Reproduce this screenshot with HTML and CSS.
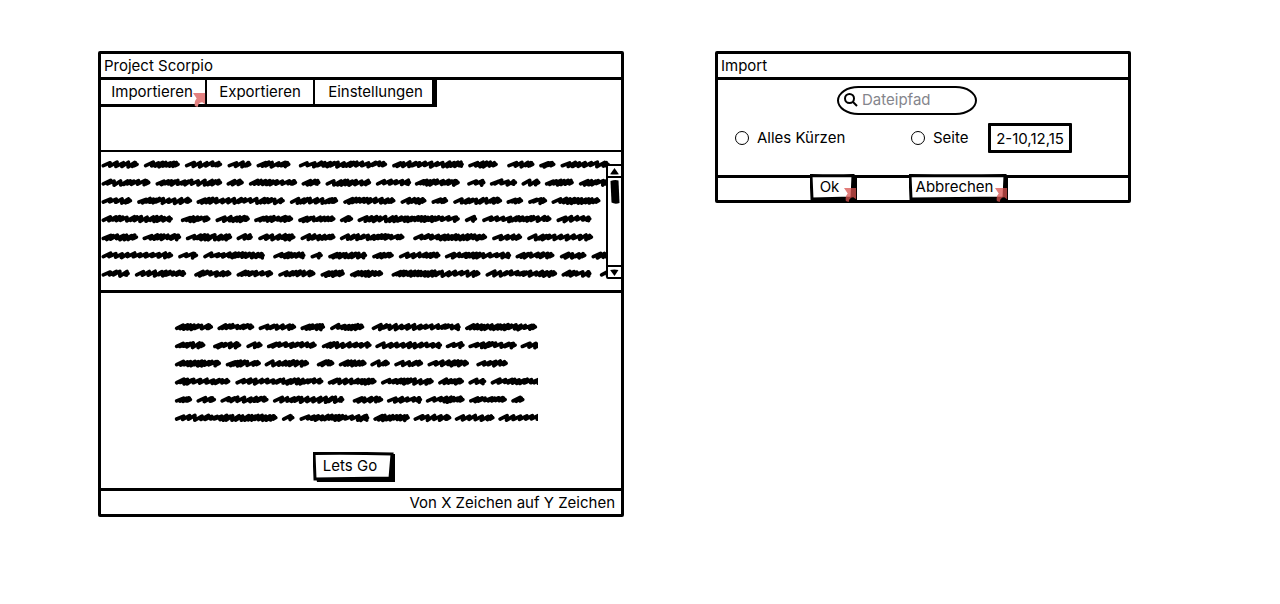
FILE: index.html
```html
<!DOCTYPE html>
<html lang="de">
<head>
<meta charset="utf-8">
<title>Project Scorpio</title>
<link rel="stylesheet" href="styles.css">
</head>
<body>
<svg class="defs" aria-hidden="true">
  <symbol id="link-arrow" viewBox="0 0 14 16"><path d="M0 1 L13 1 L13 13 L10 11 Q6 11 5 16 L2 15 Q1 10 4 7 Z"/></symbol>
</svg>
<main class="board">
  <section class="window">
    <h1 class="title">Project Scorpio</h1>
    <div class="toolbar">
      <nav class="menu">
        <button class="menu-item menu-first">Importieren<svg class="arrow"><use href="#link-arrow"/></svg></button>
        <button class="menu-item">Exportieren</button>
        <button class="menu-item menu-last">Einstellungen</button>
      </nav>
    </div>
    <div class="source">
      <svg class="scribble" id="source-text" viewBox="33 22 1527 400" role="img" aria-label="Text"></svg>
      <div class="scrollbar">
        <button class="step" aria-label="Nach oben"><svg class="tri" viewBox="0 0 10 8"><path d="M5 0 L10 7 Q5 8 0 7 Z"/></svg></button>
        <div class="track"><svg class="thumb" viewBox="0 0 10 24"><path d="M.5 1 Q5 -.5 8.500 .5 L9.500 23 Q5 24.500 1.500 22.500 Z"/></svg></div>
        <button class="step step-down" aria-label="Nach unten"><svg class="tri" viewBox="0 0 10 8"><path d="M0 1 Q5 0 9.500 1 L5 8 Z"/></svg></button>
      </div>
    </div>
    <div class="result">
      <svg class="scribble result-text" id="result-text" viewBox="22 32 1095 312" role="img" aria-label="Kurztext"></svg>
      <button class="button go">
        <svg class="frame" viewBox="0 0 82 30" preserveAspectRatio="none"><path class="shade" d="M77 2 L82 2 L82 30 L4 30 L3 25 L77 25 Z"/><path class="edge" d="M1 1.500 Q40 1 79 2 L77 26 L2 27 Z"/></svg>
        <span class="caption">Lets Go</span>
      </button>
    </div>
    <footer class="status">Von X Zeichen auf Y Zeichen</footer>
  </section>

  <section class="window dialog">
    <h2 class="title">Import</h2>
    <form class="form">
      <label class="search">
        <svg class="lens" viewBox="0 0 14 14"><circle cx="5.500" cy="5.500" r="4.500"/><path d="M9 9 L13 13"/></svg>
        <input class="search-input" type="text" placeholder="Dateipfad" aria-label="Dateipfad">
      </label>
      <div class="options">
        <label class="option"><input class="radio" type="radio" name="range">Alles Kürzen</label>
        <label class="option option-page"><input class="radio" type="radio" name="range">Seite</label>
        <input class="pages" type="text" value="2-10,12,15" aria-label="Seiten">
      </div>
    </form>
    <footer class="actions">
      <button class="button ok">
        <svg class="frame" viewBox="0 0 47 28" preserveAspectRatio="none"><path class="shade" d="M42 2 L47 2 L47 28 L3 28 L2 24 L42 24 Z"/><path class="edge" d="M1 1.500 Q25 2 43 1.500 L42 24 L2 25 Z"/></svg>
        <span class="caption">Ok</span><svg class="arrow"><use href="#link-arrow"/></svg>
      </button>
      <button class="button cancel">
        <svg class="frame" viewBox="0 0 99 28" preserveAspectRatio="none"><path class="shade" d="M94 3 L99 3 L99 28 L4 28 L3 24 L94 24 Z"/><path class="edge" d="M1 1.500 Q50 2 96 1.500 L95 24 L2 25 Z"/></svg>
        <span class="caption">Abbrechen</span><svg class="arrow"><use href="#link-arrow"/></svg>
      </button>
    </footer>
  </section>
</main>
<script src="scribble.js"></script>
</body>
</html>
```
FILE: styles.css
```css
* { box-sizing: border-box; }
body {
  margin: 0;
  background: #fff;
  color: #000;
  font: 15px/24px Inter, "Liberation Sans", sans-serif;
}
button, input { font: inherit; color: inherit; }
button { background: none; border: 0; padding: 0; cursor: pointer; }
.defs { position: absolute; width: 0; height: 0; }
.board {
  display: grid;
  grid-template-columns: 526fr 416fr;
  gap: 91px;
  align-items: start;
  padding: 51px 149px 51px 98px;
}
.window { border: 3px solid #000; border-radius: 2px; min-width: 0; }
.title {
  margin: 0;
  padding: 0 3px;
  font-size: 15px;
  font-weight: 400;
  line-height: 23px;
  border-bottom: 3px solid #000;
}

.toolbar { height: 72px; border-bottom: 2px solid #000; }
.menu {
  display: inline-flex;
  vertical-align: top;
  border: solid #000;
  border-width: 0 5px 3px 0;
}
.menu-item {
  position: relative;
  width: 108px;
  padding: 0 0 1px;
  line-height: 23px;
  border-right: 2px solid #000;
}
.menu-first { width: 106px; padding-right: 2px; }
.menu-last { width: 117px; padding-left: 4px; border-right: 0; }
.arrow {
  position: absolute;
  right: -1px;
  bottom: -3px;
  width: 13px;
  height: 15px;
  fill: #e38181;
}

.source {
  position: relative;
  height: 141px;
  border-bottom: 3px solid #000;
}
.scribble { display: block; fill: none; stroke: #000; stroke-width: 11; stroke-linecap: round; stroke-linejoin: round; }
.source .scribble { width: 509px; max-width: 100%; }
.scrollbar {
  position: absolute;
  top: 12px;
  right: -2px;
  display: flex;
  flex-direction: column;
  width: 17px;
  height: 115px;
  background: #fff;
  border: 2px solid #000;
  border-radius: 2px;
}
.step { display: flex; align-items: center; justify-content: center; height: 12px; border-bottom: 2px solid #000; }
.step-down { border-top: 2px solid #000; border-bottom: 0; }
.tri { width: 9px; height: 7px; }
.track { flex: 1; padding: 2px; }
.thumb { display: block; width: 10px; height: 24px; }

.result {
  display: flex;
  flex-direction: column;
  align-items: center;
  padding: 28px 0 6px;
}
.result-text { width: 70%; margin-right: 11px; }
.button { position: relative; height: 30px; }
.frame { position: absolute; inset: 0; width: 100%; height: 100%; }
.edge { fill: #fff; stroke: #000; stroke-width: 3; }
.caption { position: relative; }
.go { width: 82px; margin: 27px 14px 0 0; padding: 0 8px 1px 0; }
.status { padding: 0 6px; text-align: right; line-height: 23px; border-top: 3px solid #000; }

.form { padding: 6px 0 22px; }
.search {
  display: flex;
  align-items: center;
  width: 140px;
  height: 29px;
  margin: 0 0 0 119px;
  padding: 0 10px 2px 5px;
  border: 2px solid #000;
  border-radius: 22px / 15px;
}
.lens { flex: none; width: 14px; height: 14px; margin-right: 4px; fill: none; stroke: #000; stroke-width: 2; }
.search-input { width: 100%; min-width: 0; padding: 0; border: 0; outline: 0; background: none; }
.search-input::placeholder { color: #85858c; opacity: 1; }
.options { display: flex; align-items: center; padding: 8px 0 0 17px; }
.option { display: flex; align-items: center; gap: 8px; width: 176px; white-space: nowrap; }
.option-page { width: 77px; }
.radio {
  appearance: none;
  width: 14px;
  height: 14px;
  margin: 0;
  border: 1px solid #000;
  border-radius: 50%;
}
.radio:checked { background: #000; }
.pages { width: 84px; height: 30px; padding: 0; text-align: center; border: 3px solid #000; border-radius: 1px; }
.actions { display: flex; gap: 52px; padding-left: 92px; height: 25px; border-top: 3px solid #000; }
.actions .button { height: 28px; margin-top: -4px; }
.ok { width: 47px; padding: 0 8px 2px 0; }
.cancel { width: 99px; padding: 0 8px 2px 0; }
.actions .arrow { right: 0; bottom: 0; fill: #d9534f; opacity: .75; }
```
FILE: scribble.js
```js
// Each row lists the start and end of its words.
const source = [
  [35,145,162,268,285,395,413,483,500,600,627,890,907,1120,1135,1222,1252,1332,1348,1395,1412,1558],
  [35,180,197,395,410,460,477,620,635,690,707,842,858,962,975,1108,1132,1185,1200,1280,1295,1350,1365,1450,1467,1558],
  [35,125,142,305,320,583,600,743,760,915,932,1008,1025,1073,1090,1235,1250,1298,1315,1370,1385,1530],
  [35,247,273,360,377,478,493,608,625,735,750,788,803,1108,1125,1160,1177,1383,1400,1503],
  [35,143,158,272,288,425,440,487,505,615,632,735,750,942,970,1190,1207,1295,1312,1508],
  [35,248,265,323,340,523,550,645,662,697,715,830,847,910,927,1050,1065,1262,1277,1392,1410,1488,1505,1560],
  [35,118,135,287,313,423,440,548,565,675,692,763,780,878,905,1170,1187,1400,1415,1503,1530,1575]
];
const result = [
  [25,138,153,262,277,388,403,475,492,593,617,883,898,1113],
  [25,115,140,223,240,287,302,450,467,615,628,827,840,895,908,1052,1065,1130],
  [25,162,178,282,295,427,452,503,518,600,613,670,685,770,785,908,932,1025],
  [25,190,207,470,485,630,645,802,817,893,908,960,975,1130],
  [25,75,90,147,162,305,320,533,560,650,663,767,780,895,910,1022,1037,1075],
  [25,332,347,383,400,608,622,730,743,855,867,985,998,1130]
];

let seed = 7;
function random() {
  seed = (seed * 16807) % 2147483647;
  return seed / 2147483647;
}

function word(start, end, y) {
  let x = start + 5;
  let d = `M${x} ${y + 4}`;
  let wide = random() > .5;
  while (x < end - 24) {
    if (random() > .7) wide = !wide;
    const peak = Math.min(x + 19 + random() * 4, end - 7);
    d += `L${peak.toFixed(1)} ${(y - 4 - random() * 3).toFixed(1)}`;
    x += wide ? 17 + random() * 3 : 9 + random() * 4;
    d += `L${x.toFixed(1)} ${(y + 3 + random() * 5).toFixed(1)}`;
  }
  return d + `L${end - 9} ${y - 5}L${end - 12} ${y + 4}L${end - 4} ${y}`;
}

function scribble(id, rows, top) {
  const svg = document.getElementById(id);
  rows.forEach((row, i) => {
    const path = document.createElementNS("http://www.w3.org/2000/svg", "path");
    let d = "";
    for (let k = 0; k < row.length; k += 2) d += word(row[k], row[k + 1], top + i * 54.6);
    path.setAttribute("d", d);
    svg.appendChild(path);
  });
}

scribble("source-text", source, 59);
scribble("result-text", result, 50);
```
